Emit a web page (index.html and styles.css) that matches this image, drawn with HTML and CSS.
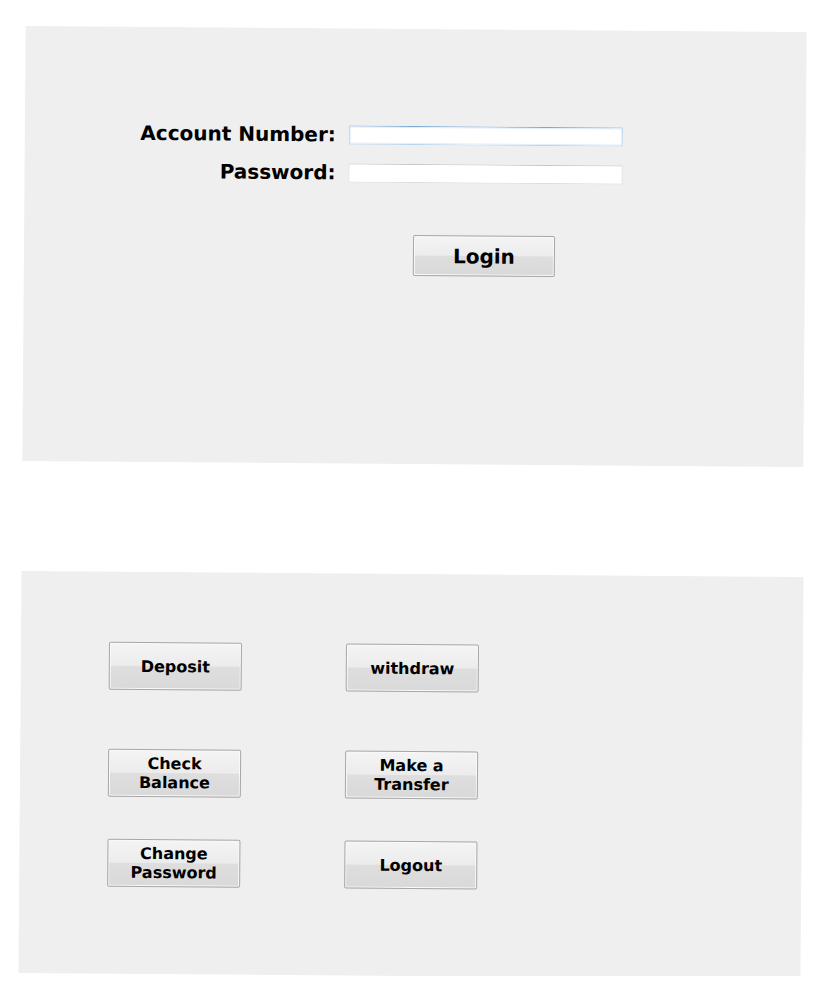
FILE: index.html
```html
<!DOCTYPE html>
<html>
<head>
<meta charset="utf-8">
<link rel="stylesheet" href="styles.css">
</head>
<body>
<div class="page">
  <section class="panel login-panel">
    <div class="form">
      <div class="row">
        <label class="label">Account Number:</label>
        <input class="field focused" type="text">
      </div>
      <div class="row">
        <label class="label">Password:</label>
        <input class="field" type="password">
      </div>
    </div>
    <div class="login-wrap">
      <button class="btn login-btn">Login</button>
    </div>
  </section>
  <section class="panel menu-panel">
    <div class="menu">
      <button class="btn menu-btn">Deposit</button>
      <button class="btn menu-btn">withdraw</button>
      <button class="btn menu-btn r2">Check<br>Balance</button>
      <button class="btn menu-btn r2">Make a<br>Transfer</button>
      <button class="btn menu-btn r3">Change<br>Password</button>
      <button class="btn menu-btn r3">Logout</button>
    </div>
  </section>
</div>
</body>
</html>
```
FILE: styles.css
```css
html, body {
  margin: 0;
  padding: 0;
  background: #ffffff;
}
body {
  font-family: "DejaVu Sans", Verdana, sans-serif;
  color: #000;
}
.page {
  display: flex;
  flex-direction: column;
  padding-top: 29px;
}
.panel {
  background: #efefef;
  transform: rotate(0.44deg);
}
.login-panel {
  margin-left: 24px;
  width: 781px;
  height: 435px;
  box-sizing: border-box;
  padding-top: 96px;
}
.menu-panel {
  margin-top: 110px;
  margin-left: 20px;
  width: 782px;
  height: 402px;
  box-sizing: border-box;
  padding-top: 70px;
  padding-left: 88px;
}
.form {
  display: flex;
  flex-direction: column;
  gap: 18px;
}
.row {
  display: flex;
  align-items: center;
  height: 20px;
}
.label {
  width: 311px;
  text-align: right;
  font-weight: bold;
  font-size: 20px;
  line-height: 20px;
  padding-right: 13px;
}
.field {
  box-sizing: border-box;
  width: 274px;
  height: 19px;
  margin: 0;
  padding: 0;
  background: #fff;
  border: 1px solid #dcdcdc;
  border-top-color: #c6c6c6;
  border-radius: 1px;
  outline: none;
}
.field.focused {
  border: 1px solid #b8d4ee;
  border-top-color: #7aa8d8;
  box-shadow: inset 0 0 0 1px #e2eefa;
}
.login-wrap {
  padding-left: 389px;
  padding-top: 52px;
}
.btn {
  box-sizing: border-box;
  font-family: "DejaVu Sans", Verdana, sans-serif;
  font-weight: bold;
  color: #000;
  border: 1px solid #a7a7a7;
  border-radius: 2px;
  background: linear-gradient(to bottom, #f4f4f4 0%, #ececec 49%, #dedede 51%, #d9d9d9 100%);
  box-shadow: inset 0 0 0 1px #fafafa;
  padding: 0;
  margin: 0;
}
.login-btn {
  width: 142px;
  height: 41px;
  font-size: 20px;
}
.menu {
  display: grid;
  grid-template-columns: 133px 133px;
  column-gap: 104px;
  grid-template-rows: auto auto auto;
}
.menu-btn {
  width: 133px;
  height: 48px;
  font-size: 16px;
  line-height: 19px;
}
.menu-btn.r2 {
  margin-top: 59px;
}
.menu-btn.r3 {
  margin-top: 42px;
}
```
